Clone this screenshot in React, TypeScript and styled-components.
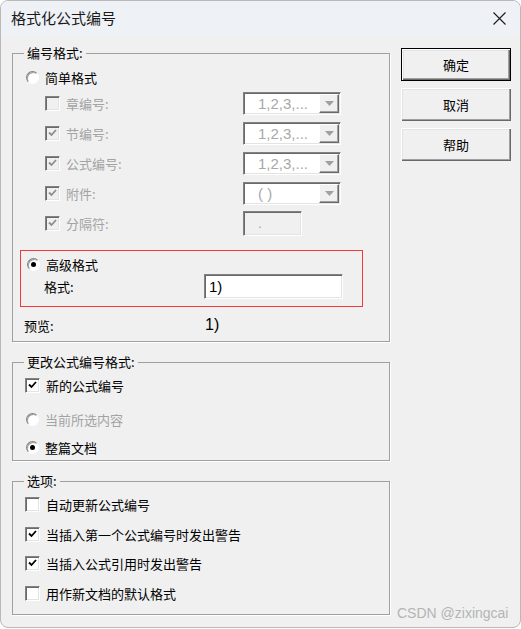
import styled, { createGlobalStyle, css } from 'styled-components';

const GlobalStyle = createGlobalStyle`
  html, body {
    margin: 0;
    padding: 0;
    background: #ffffff;
  }
  body {
    font-family: "Noto Sans CJK SC", "Liberation Sans", sans-serif;
    font-size: 13px;
    color: #000;
  }
`;

const Window = styled.div`
  width: 521px;
  height: 628px;
  box-sizing: border-box;
  border: 1px solid #b9b9b9;
  border-radius: 8px;
  overflow: hidden;
  background: #f0f0f0;
  display: flex;
  flex-direction: column;
`;

const TitleBar = styled.div`
  height: 34px;
  background: #eef2f7;
  display: flex;
  align-items: center;
  justify-content: space-between;
  padding: 0 14px 0 10px;
  flex-shrink: 0;
`;

const Title = styled.div`
  font-size: 15px;
  color: #1a1a1a;
  padding-bottom: 1px;
`;

const Body = styled.div`
  flex: 1;
  display: flex;
  padding: 10px 0 0 11px;
`;

const LeftColumn = styled.div`
  width: 378px;
  display: flex;
  flex-direction: column;
`;

const RightColumn = styled.div`
  margin-left: 11px;
  padding-top: 3px;
  width: 110px;
  display: flex;
  flex-direction: column;
  gap: 7px;
`;

const Group = styled.fieldset<{ $gap?: number; $bottom?: number }>`
  margin: 0;
  min-width: 0;
  box-sizing: border-box;
  border: 1px solid #a0a0a0;
  box-shadow: 1px 1px 0 #ffffff;
  padding: 0 10px ${p => p.$bottom ?? 0}px 12px;
  & + & {
    margin-top: ${p => p.$gap ?? 14}px;
  }
`;

const Legend = styled.legend`
  margin-left: -1px;
  padding: 0 3px;
  font-size: 13px;
  line-height: 16px;
`;

const Row = styled.label<{ $disabled?: boolean; $top?: number }>`
  display: flex;
  align-items: center;
  height: 20px;
  gap: 6px;
  margin-top: ${p => p.$top ?? 0}px;
  color: ${p => (p.$disabled ? '#a3a3a3' : '#000')};
  white-space: nowrap;
`;

const Sunken = css`
  box-sizing: border-box;
  border-style: solid;
  border-width: 1px;
  border-color: #828282 #ffffff #ffffff #828282;
  box-shadow: inset 1px 1px 0 #696969, inset -1px -1px 0 #e3e3e3;
`;

const CheckBox = styled.span<{ $disabled?: boolean }>`
  ${Sunken};
  width: 15px;
  height: 15px;
  flex-shrink: 0;
  display: flex;
  align-items: center;
  justify-content: center;
  background: ${p => (p.$disabled ? '#f0f0f0' : '#ffffff')};
`;

const RadioCircle = styled.span`
  width: 13px;
  height: 13px;
  margin-left: 1px;
  flex-shrink: 0;
  box-sizing: border-box;
  border-radius: 50%;
  border: 1px solid;
  border-color: #828282 #ffffff #ffffff #828282;
  background: #ffffff;
  box-shadow: inset 1px 1px 0 #a0a0a0;
  display: flex;
  align-items: center;
  justify-content: center;
`;

const RadioDot = styled.span`
  width: 5px;
  height: 5px;
  border-radius: 50%;
  background: #000;
`;

const OptionGrid = styled.div`
  margin: 1px 0 0 20px;
  display: grid;
  grid-template-columns: 198px 98px;
  grid-auto-rows: 30px;
  align-items: center;
`;

const Combo = styled.div`
  ${Sunken};
  height: 23px;
  background: #ffffff;
  display: flex;
  align-items: stretch;
  padding: 1px;
`;

const ComboText = styled.span`
  flex: 1;
  padding-left: 13px;
  display: flex;
  align-items: center;
  font-family: "Liberation Sans", "Noto Sans", sans-serif;
  font-size: 15px;
  color: #a8a8a8;
`;

const ComboButton = styled.span`
  width: 20px;
  background: #f0f0f0;
  box-sizing: border-box;
  border-style: solid;
  border-width: 1px;
  border-color: #ffffff #696969 #696969 #ffffff;
  box-shadow: inset -1px -1px 0 #a0a0a0;
  display: flex;
  align-items: center;
  justify-content: center;
`;

const SeparatorBox = styled.div`
  ${Sunken};
  width: 59px;
  height: 25px;
  background: #f0f0f0;
  display: flex;
  align-items: center;
  padding-left: 14px;
  color: #a8a8a8;
  font-family: "Liberation Sans", sans-serif;
  font-size: 14px;
`;

const Highlight = styled.div`
  margin: 12px 0 0 -5px;
  width: 343px;
  height: 57px;
  box-sizing: border-box;
  border: 1px solid #ef3b3b;
  padding: 3px 0 0 5px;
`;

const FieldRow = styled.div`
  display: grid;
  grid-template-columns: 160px 139px;
  align-items: center;
  height: 25px;
  padding-left: 18px;
`;

const TextField = styled.div`
  ${Sunken};
  height: 25px;
  background: #ffffff;
  display: flex;
  align-items: center;
  padding-left: 4px;
  font-family: "Liberation Sans", sans-serif;
  font-size: 15px;
`;

const PreviewRow = styled.div`
  margin: 8px 0 6px -1px;
  display: grid;
  grid-template-columns: 181px 1fr;
  align-items: center;
  height: 20px;
`;

const PreviewValue = styled.span`
  font-family: "Liberation Sans", sans-serif;
  font-size: 16px;
`;

const DialogButton = styled.button<{ $default?: boolean }>`
  width: 110px;
  height: 33px;
  box-sizing: border-box;
  background: #f0f0f0;
  border: ${p => (p.$default ? '1px solid #000' : 'none')};
  box-shadow:
    inset 1px 1px 0 #ffffff,
    inset -1px -1px 0 #696969,
    inset -2px -2px 0 #a0a0a0,
    inset 2px 2px 0 #e3e3e3;
  font-family: "Noto Sans CJK SC", sans-serif;
  font-size: 13px;
  color: #000;
  padding: 0;
  cursor: pointer;
`;

const Watermark = styled.div`
  margin-top: auto;
  margin-bottom: 6px;
  margin-left: -4px;
  font-family: "Liberation Sans", sans-serif;
  font-size: 14px;
  color: #b4b4b4;
  white-space: nowrap;
`;

const Check = ({ disabled }: { disabled?: boolean }) => (
  <svg width="9" height="8" viewBox="0 0 9 8">
    <path d="M1 3.5 L3.5 6 L8 1" fill="none" stroke={disabled ? '#8d8d8d' : '#000'} strokeWidth="1.8" />
  </svg>
);

const Arrow = () => (
  <svg width="9" height="5" viewBox="0 0 9 5">
    <path d="M0 0 H9 L4.5 5 Z" fill="#a0a0a0" />
  </svg>
);

const CloseIcon = () => (
  <svg width="13" height="13" viewBox="0 0 13 13">
    <path d="M0.5 0.5 L12.5 12.5 M12.5 0.5 L0.5 12.5" stroke="#1a1a1a" strokeWidth="1.1" />
  </svg>
);

interface CheckRowProps {
  label: string;
  checked?: boolean;
  disabled?: boolean;
  top?: number;
}

const CheckRow = ({ label, checked, disabled, top }: CheckRowProps) => (
  <Row $disabled={disabled} $top={top}>
    <CheckBox $disabled={disabled}>{checked && <Check disabled={disabled} />}</CheckBox>
    {label}
  </Row>
);

interface RadioRowProps {
  label: string;
  selected?: boolean;
  disabled?: boolean;
  top?: number;
}

const RadioRow = ({ label, selected, disabled, top }: RadioRowProps) => (
  <Row $disabled={disabled} $top={top}>
    <RadioCircle>{selected && <RadioDot />}</RadioCircle>
    {label}
  </Row>
);

const numbering = [
  { label: '章编号:', checked: false, value: '1,2,3,...' },
  { label: '节编号:', checked: true, value: '1,2,3,...' },
  { label: '公式编号:', checked: true, value: '1,2,3,...' },
  { label: '附件:', checked: true, value: '( )' },
];

export default function App() {
  return (
    <>
      <GlobalStyle />
      <Window>
        <TitleBar>
          <Title>格式化公式编号</Title>
          <CloseIcon />
        </TitleBar>
        <Body>
          <LeftColumn>
            <Group>
              <Legend>编号格式:</Legend>
              <RadioRow label="简单格式" top={6} />
              <OptionGrid>
                {numbering.flatMap(item => [
                  <CheckRow key={item.label} label={item.label} checked={item.checked} disabled />,
                  <Combo key={item.label + '-combo'}>
                    <ComboText>{item.value}</ComboText>
                    <ComboButton>
                      <Arrow />
                    </ComboButton>
                  </Combo>,
                ])}
                <CheckRow label="分隔符:" checked disabled />
                <SeparatorBox>.</SeparatorBox>
              </OptionGrid>
              <Highlight>
                <RadioRow label="高级格式" selected />
                <FieldRow>
                  <span>格式:</span>
                  <TextField>1)</TextField>
                </FieldRow>
              </Highlight>
              <PreviewRow>
                <span>预览:</span>
                <PreviewValue>1)</PreviewValue>
              </PreviewRow>
            </Group>

            <Group $bottom={3}>
              <Legend>更改公式编号格式:</Legend>
              <CheckRow label="新的公式编号" checked top={5} />
              <RadioRow label="当前所选内容" disabled top={14} />
              <RadioRow label="整篇文档" selected top={8} />
            </Group>

            <Group $gap={12} $bottom={11}>
              <Legend>选项:</Legend>
              <CheckRow label="自动更新公式编号" top={5} />
              <CheckRow label="当插入第一个公式编号时发出警告" checked top={10} />
              <CheckRow label="当插入公式引用时发出警告" checked top={9} />
              <CheckRow label="用作新文档的默认格式" top={10} />
            </Group>
          </LeftColumn>

          <RightColumn>
            <DialogButton $default>确定</DialogButton>
            <DialogButton>取消</DialogButton>
            <DialogButton>帮助</DialogButton>
            <Watermark>CSDN @zixingcai</Watermark>
          </RightColumn>
        </Body>
      </Window>
    </>
  );
}
